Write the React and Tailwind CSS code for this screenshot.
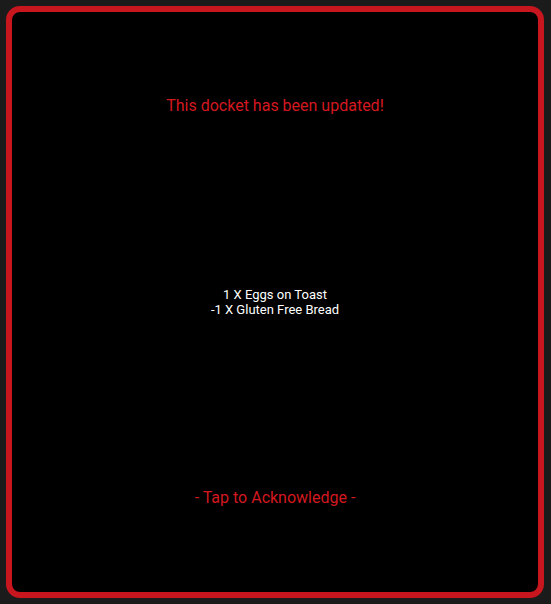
import React from 'react';

export default function App() {
  return (
    <div className="h-[604px] w-full bg-[#1b1b1b] pb-[6px] pl-[6px] pr-[7px] pt-[6px] font-['Roboto',sans-serif]">
      <div className="flex h-full flex-col items-center justify-between rounded-[14px] border-[6px] border-[#c8161e] bg-black pb-[82px] pt-[82px] text-center">
        <div className="text-[16px] leading-6 text-[#d4181f]">This docket has been updated!</div>
        <div className="text-[13px] leading-[15px] text-white">
          <div>1 X Eggs on Toast</div>
          <div>-1 X Gluten Free Bread</div>
        </div>
        <div className="text-[16px] leading-6 text-[#d4181f]">- Tap to Acknowledge -</div>
      </div>
    </div>
  );
}
